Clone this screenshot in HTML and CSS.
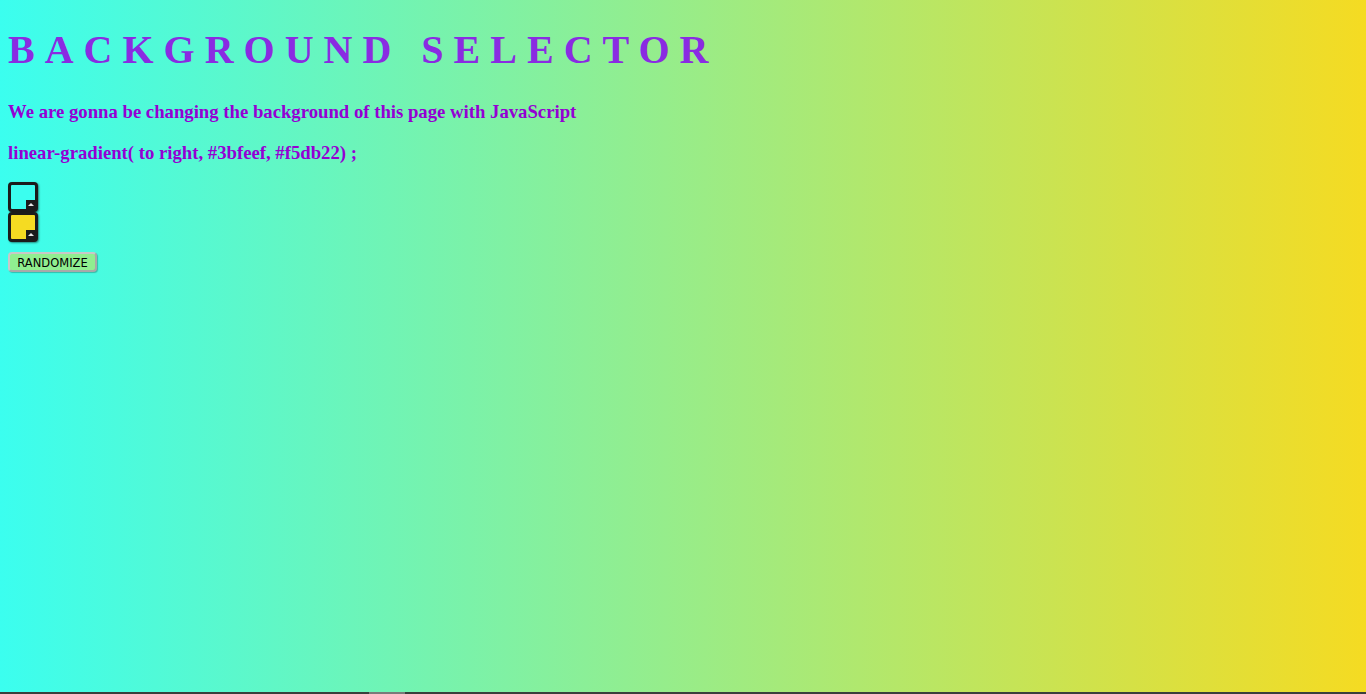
FILE: index.html
```html
<!DOCTYPE html>
<html>
<head>
<meta charset="utf-8">
<title>Background Selector</title>
<link rel="stylesheet" href="styles.css">
</head>
<body>
<main class="page">
  <h1 class="title">Background Selector</h1>
  <h3 class="lead">We are gonna be changing the background of this page with JavaScript</h3>
  <h3 class="lead lead-code">linear-gradient( to right, #3bfeef, #f5db22) ;</h3>
  <div class="pickers">
    <div class="picker"><span class="swatch swatch-a"></span><span class="notch"></span></div>
    <div class="picker"><span class="swatch swatch-b"></span><span class="notch"></span></div>
  </div>
  <button class="randomize">RANDOMIZE</button>
</main>
<div class="scrollbar"><span class="thumb"></span></div>
</body>
</html>
```
FILE: styles.css
```css
html, body {
  margin: 0;
  height: 100%;
}
body {
  background: linear-gradient(to right, #3bfeef, #f5db22);
  font-family: "Liberation Serif", "Times New Roman", serif;
  overflow: hidden;
}
.page {
  padding: 0 8px;
  display: flow-root;
}
.title {
  font-size: 40px;
  font-weight: bold;
  letter-spacing: 10px;
  text-transform: uppercase;
  color: #8a2be2;
  margin: 27px 0 28px;
  line-height: 46px;
}
.lead {
  font-size: 18.72px;
  font-weight: bold;
  color: #9400d3;
  margin: 0 0 19px;
  line-height: 22px;
}
.lead-code {
  margin-bottom: 18px;
}
.pickers {
  display: flex;
  flex-direction: column;
}
.picker {
  position: relative;
  width: 30px;
  height: 30px;
  box-sizing: border-box;
  border: 3px solid #1b1b1b;
  border-radius: 4px;
  background: #1b1b1b;
  box-shadow: 1px 1px 2px rgba(0,0,0,0.45);
}
.swatch {
  display: block;
  width: 100%;
  height: 100%;
  border-radius: 1px;
}
.swatch-a { background: #3bfeef; }
.swatch-b { background: #f5db22; }
.notch {
  position: absolute;
  right: 0;
  bottom: 0;
  width: 9px;
  height: 9px;
  background: #1b1b1b;
}
.notch::after {
  content: "";
  position: absolute;
  left: 2px;
  top: 3px;
  border-left: 3px solid transparent;
  border-right: 3px solid transparent;
  border-bottom: 3px solid #e8e8e8;
}
.randomize {
  display: block;
  margin-top: 10px;
  width: 89px;
  height: 20px;
  padding: 1px 0 0;
  background: #90ee90;
  border: 2px solid #a9a9a9;
  border-top-color: #c8c8c8;
  border-left-color: #c8c8c8;
  border-radius: 4px;
  box-shadow: 1px 1px 1px rgba(0,0,0,0.25);
  font-family: "DejaVu Sans", Verdana, sans-serif;
  font-size: 11.5px;
  color: #000;
  line-height: 14px;
}
.scrollbar {
  position: fixed;
  left: 0;
  right: 0;
  bottom: 0;
  height: 2px;
  background: #3a3f3c;
}
.thumb {
  position: absolute;
  left: 369px;
  width: 36px;
  top: 0;
  height: 2px;
  background: #7a7a7a;
}
```
